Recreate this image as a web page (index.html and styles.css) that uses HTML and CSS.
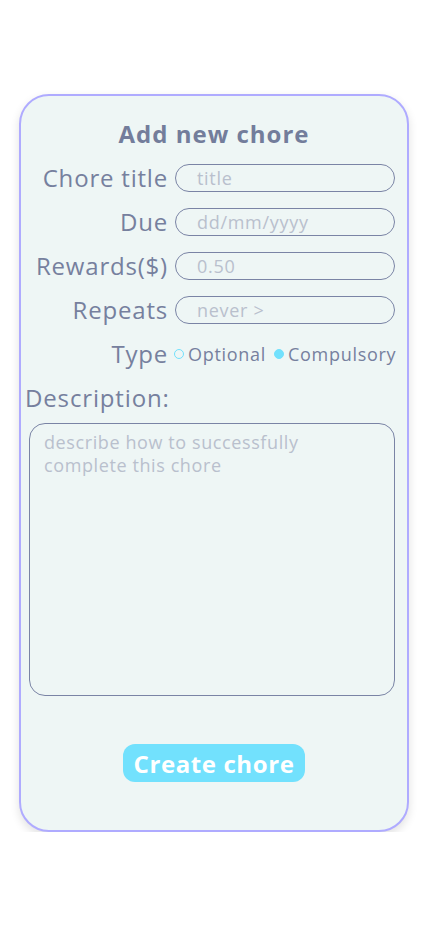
FILE: index.html
```html
<!DOCTYPE html>
<html>
<head>
<meta charset="utf-8">
<link rel="stylesheet" href="styles.css">
</head>
<body>
<div class="page">
  <form class="card">
    <h1 class="title">Add new chore</h1>
    <div class="fields">
      <label class="label">Chore title</label>
      <div class="input"><span class="ph">title</span></div>
      <label class="label">Due</label>
      <div class="input"><span class="ph">dd/mm/yyyy</span></div>
      <label class="label">Rewards($)</label>
      <div class="input"><span class="ph">0.50</span></div>
      <label class="label">Repeats</label>
      <div class="input"><span class="ph">never &gt;</span></div>
      <label class="label">Type</label>
      <div class="radios">
        <span class="radio"><span class="dot"></span>Optional</span>
        <span class="radio"><span class="dot filled"></span>Compulsory</span>
      </div>
    </div>
    <div class="desc-label">Description:</div>
    <div class="textarea"><span class="ph2">describe how to successfully complete this chore</span></div>
    <div class="actions"><button type="button" class="btn">Create chore</button></div>
  </form>
</div>
</body>
</html>
```
FILE: styles.css
```css
html, body { margin: 0; padding: 0; background: #ffffff; }
body { font-family: "Open Sans", "DejaVu Sans", sans-serif; color: #76809e; }
.page { padding: 94px 0 0 19px; }
.card {
  box-sizing: border-box;
  width: 390px;
  height: 738px;
  border: 2px solid #afabff;
  border-radius: 30px;
  background: #eef6f5;
  box-shadow: 0 4px 10px rgba(0,0,0,0.12);
  display: flex;
  flex-direction: column;
  padding: 24px 12px 0 0;
}
.title {
  margin: 0;
  font-size: 24px;
  line-height: 28px;
  font-weight: 700;
  letter-spacing: 1px;
  text-align: center;
  padding-left: 12px;
  color: #737d9b;
}
.fields {
  margin-top: 16px;
  display: grid;
  grid-template-columns: 147px 220px;
  column-gap: 7px;
  row-gap: 16px;
  align-items: center;
}
.label {
  text-align: right;
  font-size: 24px;
  line-height: 28px;
  letter-spacing: 0.8px;
  white-space: nowrap;
}
.input {
  box-sizing: border-box;
  height: 28px;
  border: 1px solid #7a84a5;
  border-radius: 14px;
  padding-left: 21px;
  display: flex;
  align-items: center;
}
.ph { font-size: 18px; letter-spacing: 0.7px; color: #b9c0cd; }
.radios {
  display: flex;
  align-items: center;
  gap: 8px;
  font-size: 18px;
  letter-spacing: 0.7px;
  white-space: nowrap;
  margin-left: -1px;
}
.radio { display: flex; align-items: center; gap: 4px; }
.dot {
  box-sizing: border-box;
  width: 10px; height: 10px;
  border-radius: 50%;
  border: 1.5px solid #72e1fd;
}
.dot.filled { background: #72e1fd; }
.desc-label {
  margin: 16px 0 0 4px;
  font-size: 24px;
  line-height: 28px;
  letter-spacing: 0.85px;
}
.textarea {
  box-sizing: border-box;
  margin: 11px 0 0 8px;
  width: 366px;
  height: 273px;
  border: 1px solid #7a84a5;
  border-radius: 16px;
  padding: 7px 14px;
}
.ph2 { font-size: 18px; line-height: 23px; letter-spacing: 0.6px; color: #b9c0cd; }
.actions { display: flex; justify-content: center; margin-top: 48px; padding-left: 12px; }
.btn {
  width: 182px; height: 38px;
  border: none;
  border-radius: 12px;
  background: #72e1fd;
  color: #ffffff;
  font-family: inherit;
  font-size: 24px;
  font-weight: 700;
  letter-spacing: 0.6px;
  padding: 0;
}
```
